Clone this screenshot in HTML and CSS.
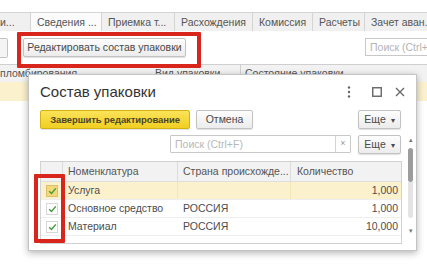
FILE: index.html
```html
<!DOCTYPE html>
<html lang="ru">
<head>
<meta charset="utf-8">
<title>Состав упаковки</title>
<link rel="stylesheet" href="styles.css">
</head>
<body>
<div class="app">
  <div class="tabs">
    <div class="tab t0">и...</div>
    <div class="tab t1 active">Сведения ...</div>
    <div class="tab t2">Приемка т...</div>
    <div class="tab t3">Расхождения</div>
    <div class="tab t4">Комиссия</div>
    <div class="tab t5">Расчеты</div>
    <div class="tab t6">Зачет аван...</div>
  </div>
  <div class="toolbar">
    <div class="cut-btn"></div>
    <div class="btn edit-btn">Редактировать состав упаковки</div>
    <div class="bg-search">Поиск (Ctrl+F)</div>
  </div>
  <div class="grid-head">
    <div class="gh c1">пломбирования</div>
    <div class="gh c2">Вид упаковки</div>
    <div class="gh c3">Состояние упаковки</div>
  </div>
  <div class="grid-row sel"></div>
</div>

<div class="mark mark-edit"></div>

<div class="dialog">
  <div class="dlg-title">
    <div class="title">Состав упаковки</div>
    <div class="title-icons">
      <svg class="ico" width="4" height="12" viewBox="0 0 4 12"><circle cx="2" cy="1.5" r="1.2" fill="#666"/><circle cx="2" cy="6" r="1.2" fill="#666"/><circle cx="2" cy="10.5" r="1.2" fill="#666"/></svg>
      <svg class="ico sq" width="10" height="10" viewBox="0 0 10 10"><rect x="0.75" y="0.75" width="8.5" height="8.5" fill="none" stroke="#666" stroke-width="1.4"/></svg>
      <svg class="ico x" width="10" height="10" viewBox="0 0 10 10"><path d="M1 1L9 9M9 1L1 9" stroke="#666" stroke-width="1.3" fill="none"/></svg>
    </div>
  </div>
  <div class="dlg-body">
    <div class="content">
      <div class="cmdbar">
        <div class="btn yellow">Завершить редактирование</div>
        <div class="btn cancel">Отмена</div>
        <div class="spacer"></div>
        <div class="btn more">Еще <span class="caret">▾</span></div>
      </div>
      <div class="searchbar">
        <div class="search">
          <span class="ph">Поиск (Ctrl+F)</span>
          <span class="clear">×</span>
        </div>
        <div class="btn more">Еще <span class="caret">▾</span></div>
      </div>
      <div class="table">
        <div class="tr th">
          <div class="td ck"></div>
          <div class="td nom">Номенклатура</div>
          <div class="td cty">Страна происхожде...</div>
          <div class="td qty lft">Количество</div>
        </div>
        <div class="tr cur">
          <div class="td ck"><span class="box on"><svg width="9" height="8" viewBox="0 0 9 8"><path d="M1.2 4.2L3.5 6.4L7.8 1.4" stroke="#3f9a3a" stroke-width="1.4" fill="none"/></svg></span></div>
          <div class="td nom">Услуга</div>
          <div class="td cty"></div>
          <div class="td qty">1,000</div>
        </div>
        <div class="tr">
          <div class="td ck"><span class="box"><svg width="9" height="8" viewBox="0 0 9 8"><path d="M1.2 4.2L3.5 6.4L7.8 1.4" stroke="#3f9a3a" stroke-width="1.4" fill="none"/></svg></span></div>
          <div class="td nom">Основное средство</div>
          <div class="td cty">РОССИЯ</div>
          <div class="td qty">1,000</div>
        </div>
        <div class="tr">
          <div class="td ck"><span class="box"><svg width="9" height="8" viewBox="0 0 9 8"><path d="M1.2 4.2L3.5 6.4L7.8 1.4" stroke="#3f9a3a" stroke-width="1.4" fill="none"/></svg></span></div>
          <div class="td nom">Материал</div>
          <div class="td cty">РОССИЯ</div>
          <div class="td qty">10,000</div>
        </div>
      </div>
    </div>
    <div class="vscroll">
      <span class="arr up">▴</span>
      <div class="track"><div class="thumb"></div><div class="rest"></div></div>
      <span class="arr down">▾</span>
    </div>
  </div>
</div>

<div class="mark mark-checks"></div>
</body>
</html>
```

FILE: styles.css
```css
* { box-sizing: border-box; }
html, body { margin: 0; padding: 0; background: #fff; }
body {
  width: 427px; height: 266px; overflow: hidden; position: relative;
  font-family: "Liberation Sans", Arial, sans-serif; font-size: 10.5px; color: #4d4d4d;
}

.app { padding-top: 12px; }

/* tabs */
.tabs { display: flex; height: 19px; border-bottom: 1px solid #d4d4d4; white-space: nowrap; }
.tab {
  flex: none; height: 19px; line-height: 18px; padding: 0 6px;
  background: #f0f0f0; border: 1px solid #d4d4d4; border-left: none; border-bottom: none;
  color: #555; overflow: hidden;
}
.tab.active { background: #fbfbfb; }
.t0 { width: 31px; padding-left: 0; }
.t1 { width: 71px; }
.t2 { width: 73px; }
.t3 { width: 78px; }
.t4 { width: 60px; }
.t5 { width: 52px; }
.t6 { width: 70px; }

/* toolbar */
.toolbar { display: flex; align-items: flex-start; height: 33px; padding-top: 7px; }
.cut-btn { width: 8px; height: 20px; border: 1px solid #c4c4c4; border-left: none; border-radius: 0 2px 2px 0; background: #f4f4f4; }
.btn {
  flex: none; height: 19px; line-height: 17px; text-align: center; white-space: nowrap;
  border: 1px solid #c2c2c2; border-radius: 2px;
  background: linear-gradient(#fdfdfd, #ececec);
  box-shadow: 0 1px 1px rgba(0,0,0,.12);
  color: #4a4a4a;
}
.edit-btn { margin-left: 15px; width: 163px; }
.bg-search {
  margin-left: auto; width: 62px; height: 18px; line-height: 16px; padding-left: 4px;
  border: 1px solid #c8c8c8; border-right: none; color: #b4b4b4; white-space: nowrap; overflow: hidden;
}

/* background grid */
.grid-head { display: flex; height: 18px; background: #f2f2f2; border-top: 1px solid #cfcfcf; line-height: 16px; color: #555; }
.gh { flex: none; white-space: nowrap; overflow: hidden; }
.c1 { width: 152px; }
.c2 { width: 89px; padding-left: 3px; border-right: 1px solid #d0d0d0; }
.c3 { flex: 1; padding-left: 4px; }
.grid-row { height: 19px; }
.grid-row.sel { background: #fcf1cd; }

/* annotations */
.mark { position: absolute; border: 4px solid #d8261d; border-radius: 1px; }
.mark-edit { left: 17px; top: 32px; width: 184px; height: 36px; }
.mark-checks { left: 34px; top: 174px; width: 31px; height: 69px; }

/* dialog */
.dialog {
  position: absolute; left: 28px; top: 74px; width: 389px; height: 177px;
  background: #fff; border: 1px solid #c4c4c4;
  box-shadow: 0 2px 7px rgba(0,0,0,.3);
}
.dlg-title { display: flex; align-items: center; height: 31px; padding: 0 11px; }
.title { font-size: 15px; color: #333; padding-top: 2px; }
.title-icons { margin-left: auto; display: flex; align-items: center; padding-top: 2px; }
.ico { display: block; }
.sq { margin-left: 21px; }
.x { margin-left: 13px; margin-right: 0; }

.dlg-body { display: flex; padding-left: 11px; }
.content { width: 362px; flex: none; }
.cmdbar { display: flex; margin-top: 4px; }
.yellow {
  width: 150px; font-weight: bold; color: #4d4526; font-size: 9.5px; letter-spacing: -0.1px;
  background: linear-gradient(#fbe35a, #f0cf22); border-color: #d2b212;
}
.cancel { width: 57px; margin-left: 6px; }
.spacer { flex: 1; }
.more { width: 43px; margin-right: 1px; }
.caret { font-size: 8px; margin-left: 2px; }

.searchbar { display: flex; justify-content: flex-end; margin-top: 6px; }
.search {
  width: 181px; height: 18px; margin-right: 7px; display: flex;
  border: 1px solid #c8c8c8; border-radius: 1px;
}
.ph { flex: 1; padding-left: 4px; line-height: 16px; color: #b8b8b8; }
.clear { width: 15px; border-left: 1px solid #d4d4d4; text-align: center; line-height: 15px; color: #999; font-size: 9px; }

.table { margin-top: 7px; height: 83px; border: 1px solid #d2d2d2; }
.tr { display: flex; height: 18px; line-height: 17px; border-bottom: 1px solid #eeeeee; }
.tr.th { height: 20px; line-height: 19px; background: #f2f2f2; border-bottom: 1px solid #dedede; color: #555; }
.tr.cur { background: #fcf1cd; }
.td { flex: none; white-space: nowrap; overflow: hidden; padding: 0 5px; }
.ck { width: 22px; padding: 0; display: flex; align-items: center; justify-content: center; }
.th .ck, .th .nom, .th .cty { border-right: 1px solid #dcdcdc; }
.cur .nom, .cur .cty { border-right: 1px solid #f3e6bd; }
.nom { width: 115px; }
.cty { width: 113px; }
.qty { flex: 1; text-align: right; padding-right: 3px; }
.qty.lft { text-align: left; padding-left: 6px; }
.box {
  width: 12px; height: 12px; border: 1px solid #d6d6d6; background: #fff;
  display: flex; align-items: center; justify-content: center;
}
.box.on { background: #f4d97c; border-color: #dcc070; }

.vscroll { width: 14px; display: flex; flex-direction: column; align-items: center; padding-left: 3px; }
.arr { font-size: 7px; color: #777; line-height: 8px; }
.up { margin-top: 30px; }
.track { width: 5px; margin-top: 4px; height: 70px; display: flex; flex-direction: column; }
.thumb { height: 34px; background: #9c9c9c; border-radius: 3px; }
.rest { flex: 1; background: #e4e4e4; border-radius: 0 0 3px 3px; }
.down { margin-top: 9px; }
```
